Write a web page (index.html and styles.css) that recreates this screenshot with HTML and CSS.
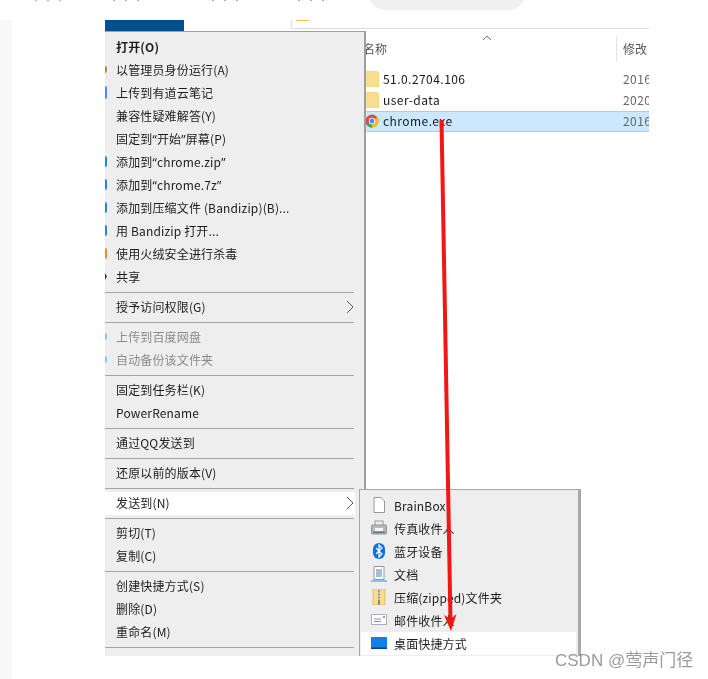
FILE: index.html
```html
<!DOCTYPE html>
<html lang="zh">
<head>
<meta charset="utf-8">
<title>chrome.exe</title>
<link rel="stylesheet" href="styles.css">
</head>
<body>
<div class="page">
  <header class="topbar">
    <div class="ticks"><i></i><i></i><i></i><i></i></div>
    <div class="pill"></div>
  </header>
  <main class="content">
    <div class="rail"></div>
    <div class="shot">
      <div class="menu-col">
        <div class="menu-head">
          <div class="blue"></div>
          <div class="thumb"><span></span></div>
        </div>
        <nav class="menu">
          <div class="row strong"><b class="gut"></b>打开(O)</div>
          <div class="row"><b class="gut brown"></b>以管理员身份运行(A)</div>
          <div class="row"><b class="gut blue1"></b>上传到有道云笔记</div>
          <div class="row"><b class="gut"></b>兼容性疑难解答(Y)</div>
          <div class="row"><b class="gut"></b><span>固定到<span class="q">“</span>开始<span class="q">”</span>屏幕(P)</span></div>
          <div class="row"><b class="gut blue2"></b><span>添加到<span class="q">“</span>chrome.zip<span class="q">”</span></span></div>
          <div class="row"><b class="gut blue2"></b><span>添加到<span class="q">“</span>chrome.7z<span class="q">”</span></span></div>
          <div class="row"><b class="gut blue2"></b>添加到压缩文件 (Bandizip)(B)...</div>
          <div class="row"><b class="gut blue2"></b>用 Bandizip 打开...</div>
          <div class="row"><b class="gut orange"></b>使用火绒安全进行杀毒</div>
          <div class="row"><b class="gut mini"></b>共享</div>
          <hr class="sep">
          <div class="row"><b class="gut"></b>授予访问权限(G)<svg class="chev" viewBox="0 0 8 14"><path d="M1 1l6 6-6 6"/></svg></div>
          <hr class="sep">
          <div class="row off"><b class="gut pale"></b>上传到百度网盘</div>
          <div class="row off"><b class="gut pale"></b>自动备份该文件夹</div>
          <hr class="sep">
          <div class="row"><b class="gut"></b>固定到任务栏(K)</div>
          <div class="row"><b class="gut"></b>PowerRename</div>
          <hr class="sep">
          <div class="row"><b class="gut"></b>通过QQ发送到</div>
          <hr class="sep">
          <div class="row"><b class="gut"></b>还原以前的版本(V)</div>
          <hr class="sep">
          <div class="row on"><b class="gut"></b>发送到(N)<svg class="chev" viewBox="0 0 8 14"><path d="M1 1l6 6-6 6"/></svg></div>
          <hr class="sep">
          <div class="row"><b class="gut"></b>剪切(T)</div>
          <div class="row"><b class="gut"></b>复制(C)</div>
          <hr class="sep">
          <div class="row"><b class="gut"></b>创建快捷方式(S)</div>
          <div class="row"><b class="gut"></b>删除(D)</div>
          <div class="row"><b class="gut"></b>重命名(M)</div>
          <hr class="sep">
        </nav>
      </div>
      <section class="explorer">
        <div class="columns">
          <svg class="sort" viewBox="0 0 10 6"><path d="M1 5l4-4 4 4"/></svg>
          <span class="col-name">名称</span>
          <span class="col-date">修改</span>
        </div>
        <div class="file">
          <svg class="ficon" viewBox="0 0 14 16"><path class="folder" d="M0 0h12v1l2 1v14H0z"/></svg>
          <span class="fname">51.0.2704.106</span><span class="fdate">2016</span>
        </div>
        <div class="file">
          <svg class="ficon" viewBox="0 0 14 16"><path class="folder" d="M0 0h12v1l2 1v14H0z"/></svg>
          <span class="fname">user-data</span><span class="fdate">2020</span>
        </div>
        <div class="file selected">
          <svg class="ficon" viewBox="0 0 14 14">
            <circle cx="7" cy="7" r="6.5" fill="#dd4b3e"/>
            <path d="M7 7L1.4 10.2A6.5 6.5 0 0 0 7 13.5z" fill="#3aa757"/>
            <path d="M7 7v6.5A6.5 6.5 0 0 0 13.5 7 6 6 0 0 0 12 3.4z" fill="#f4c20d"/>
            <circle cx="7" cy="7" r="3.2" fill="#fff"/>
            <circle cx="7" cy="7" r="2.4" fill="#4a8af4"/>
          </svg>
          <span class="fname">chrome.exe</span><span class="fdate">2016</span>
        </div>
      </section>
    </div>
  </main>

  <aside class="submenu">
    <div class="sub">
      <svg class="sicon" viewBox="0 0 16 16"><path d="M3 .5h7l3.500 3.500v11.500H3z" fill="#fff" stroke="#999"/></svg>BrainBox</div>
    <div class="sub">
      <svg class="sicon" viewBox="0 0 16 16"><rect x="4" y="1" width="8" height="5" fill="#eee" stroke="#999"/><rect x=".5" y="5" width="15" height="9" rx="1" fill="#b4bbc0" stroke="#8a9398"/><rect x="4" y="8" width="8" height="3" fill="#f6f6f6"/><rect x="2" y="11.500" width="12" height="1.500" fill="#6d7478"/></svg>传真收件人</div>
    <div class="sub">
      <svg class="sicon" viewBox="0 0 16 16"><rect x="2" y="0" width="12" height="16" rx="6" fill="#0a6fe0"/><path d="M5 5l6 6-3 3V2l3 3-6 6" fill="none" stroke="#fff" stroke-width="1.200"/></svg>蓝牙设备</div>
    <div class="sub">
      <svg class="sicon" viewBox="0 0 16 16"><path d="M3 .5h10v13H3z" fill="#fff" stroke="#8b98a5"/><path d="M5 4h6M5 6h6M5 8h6M5 10h6" stroke="#4b7fb5"/><path d="M0 15h16" stroke="#5fb4ec" stroke-width="1.500"/></svg>文档</div>
    <div class="sub">
      <svg class="sicon" viewBox="0 0 16 16"><path d="M2 0h12v16H2z" fill="#fbdc8e" stroke="#e6bf63"/><path d="M7 0h2v16H7z" fill="#8d8d8d"/><path d="M7 1h2M7 4h2M7 7h2M7 10h2" stroke="#e9e9e9"/></svg>压缩(zipped)文件夹</div>
    <div class="sub">
      <svg class="sicon" viewBox="0 0 16 12"><rect x=".5" y=".5" width="15" height="10" fill="#fff" stroke="#aab0b5"/><path d="M3 5h7M3 7.500h7" stroke="#8c9499"/><rect x="12" y="2" width="2" height="2" fill="#7ba6d0"/></svg>邮件收件人</div>
    <div class="sub on">
      <svg class="sicon" viewBox="0 0 16 12"><rect width="16" height="12" fill="#0f80e8"/><rect y="10.500" width="16" height="1.500" fill="#0a3f86"/></svg>桌面快捷方式</div>
  </aside>

  <svg class="arrow" viewBox="0 0 708 679">
    <path class="shaft" d="M441.500 120L450.500 622"/>
    <path class="head" d="M444 615l6.500 4 6-5-5.500 17z"/>
  </svg>

  <div class="watermark">CSDN @莺声门径</div>
</div>
</body>
</html>
```
FILE: styles.css
```css
* { box-sizing: border-box; }
html, body { margin: 0; padding: 0; background: #fff; }
.page {
  position: relative;
  width: 708px;
  height: 679px;
  overflow: hidden;
  background: #fff;
  font-family: "Noto Sans CJK SC", "Noto Sans", sans-serif;
  font-size: 12px;
  color: #1c1c1c;
  filter: blur(0.3px);
}

/* top strip */
.topbar { position: relative; height: 20px; }
.ticks { display: flex; height: 1px; padding-left: 35px; }
.ticks i { display: block; width: 27px; height: 1px; background: repeating-linear-gradient(90deg, #b0b0b0 0 2px, transparent 2px 12px); }
.ticks i:nth-child(2) { margin-left: 51px; }
.ticks i:nth-child(3) { margin-left: 72px; width: 31px; }
.ticks i:nth-child(4) { margin-left: 55px; }
.pill {
  position: absolute;
  left: 368px;
  top: -20px;
  width: 158px;
  height: 30px;
  border-radius: 0 0 18px 18px;
  background: #f0f0f0;
}

.content { display: flex; height: 659px; }
.rail { width: 12px; background: #f8f8f8; }
.shot { display: flex; width: 637px; padding-left: 93px; }

/* main context menu */
.menu-col { position: relative; z-index: 1; width: 261px; flex: none; }
.menu-head { display: flex; height: 11px; }
.blue { flex: none; width: 79px; background: #00508f; }
.thumb { flex: none; width: 75px; margin-left: 107px; height: 9px; padding-left: 4px; border-left: 1px solid #ddd; border-bottom: 1px solid #ddd; }
.thumb span { display: block; width: 13px; height: 1px; background: #eebf55; }
.menu {
  height: 625px;
  padding-top: 4px;
  background: #eeeeee;
  border-top: 1px solid #a0a0a0;
  border-right: 2px solid #9e9e9e;
}
.row {
  display: flex;
  align-items: center;
  width: 250px;
  height: 23px;
  padding-bottom: 2px;
  letter-spacing: 0.15px;
}
.row.on { background: #fff; }
.row.strong { font-weight: 700; }
.row.off { color: #8b8b8b; }
.q { font-family: "Noto Sans", sans-serif; }
.gut { flex: none; width: 2px; height: 10px; margin-right: 9px; border-radius: 0 5px 5px 0; }
.brown { background: #b38a3a; height: 7px; }
.blue1 { background: #4a8df6; height: 13px; }
.blue2 { background: #1f86e5; height: 11px; }
.orange { background: #f08a2c; height: 11px; }
.pale { background: #7cc6f5; height: 7px; }
.mini { height: 7px; background: #333; border-radius: 0; clip-path: polygon(0 0, 100% 50%, 0 100%); }
.chev { width: 8px; height: 14px; margin-left: auto; margin-right: 1px; }
.chev path { fill: none; stroke: #555; stroke-width: 1; }
.sep { width: 249px; height: 1px; margin: 3px 0; border: 0; background: #a4a4a4; }

/* explorer */
.explorer {
  flex: 1;
  height: 112px;
  margin-top: 8px;
  border-top: 1px solid #dcdcdc;
  overflow: hidden;
}
.columns { position: relative; display: flex; height: 40px; padding-top: 11px; color: #555; line-height: 18px; }
.col-name { margin-left: -3px; }
.sort { position: absolute; left: 116px; top: 6px; width: 10px; height: 6px; }
.sort path { fill: none; stroke: #777; stroke-width: 1; }
.col-date { margin-left: auto; width: 26px; overflow: hidden; white-space: nowrap; }
.columns::after { content: ""; position: absolute; right: 32px; top: 7px; width: 1px; height: 26px; background: #e4e4e4; }
.file { display: flex; align-items: center; height: 21px; padding-bottom: 2px; letter-spacing: 0.45px; }
.file.selected { background: #cce8ff; box-shadow: inset 0 1px #99d1ff, inset 0 -1px #99d1ff; }
.ficon { flex: none; width: 14px; height: 16px; margin-left: -1px; margin-right: 4px; }
.folder { fill: #f9de8f; stroke: #e6c566; stroke-width: .5; }
.fname { flex: 1; color: #1a1a1a; }
.fdate { width: 26px; color: #666; overflow: hidden; }

/* send-to submenu */
.submenu {
  position: absolute;
  left: 359px;
  top: 489px;
  width: 222px;
  height: 167px;
  padding: 4px 2px 0 1px;
  background: #eeeeee;
  border-top: 1px solid #a6a6a6;
  border-left: 1px solid #a6a6a6;
  border-right: 3px solid #a8a8a8;
  z-index: 2;
  overflow: hidden;
}
.sub { display: flex; align-items: center; height: 23px; padding-left: 10px; padding-bottom: 1px; letter-spacing: 0.15px; }
.sub.on { background: #fff; }
.sicon { flex: none; width: 16px; height: 16px; margin-right: 7px; }

.arrow { position: absolute; inset: 0; width: 708px; height: 679px; z-index: 3; pointer-events: none; }
.shaft { fill: none; stroke: #f21616; stroke-width: 4; }
.head { fill: #f21616; }

.watermark {
  position: absolute;
  left: 555px;
  top: 650px;
  z-index: 4;
  font-size: 17px;
  line-height: 21px;
  color: rgba(120, 120, 120, .75);
  font-family: "Liberation Sans", "Noto Sans CJK SC", sans-serif;
  white-space: nowrap;
}
```
